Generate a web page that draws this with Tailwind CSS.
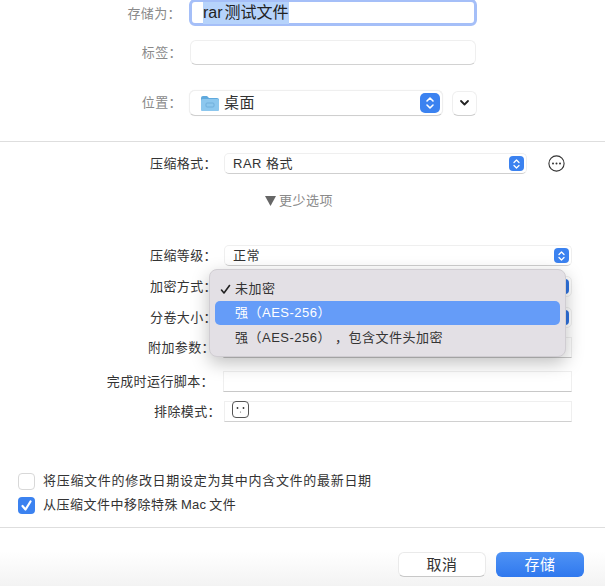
<!DOCTYPE html>
<html lang="zh-CN">
<head>
  <meta charset="UTF-8" />
  <title>存储</title>
  <script src="https://cdn.jsdelivr.net/npm/@tailwindcss/browser@4"></script>
</head>
<body class="bg-white">
<div class="relative w-[605px] h-[586px] overflow-hidden bg-white text-[13px] leading-[18px] text-[#333] font-['Liberation_Sans','Noto_Sans_CJK_SC',sans-serif]">

  <!-- Save panel top -->
  <section class="h-[142px] border-b border-[#dedede] text-[#8a8a8a]">
    <div class="flex items-center h-[27px]">
      <span class="w-[181px] text-right tracking-[0.4px]">存储为：</span>
      <div class="ml-[8px] w-[288px] h-[27px] -mt-[2px] rounded-[6px] border-[3px] border-[#a5bff8] bg-white flex items-center pl-[11px] text-[16px] text-[#222]">
        <span class="bg-[#b6d3fb] leading-[22px]">rar<span class="ml-[2px]">测试文件</span></span>
      </div>
    </div>
    <div class="flex items-center h-[25px] mt-[13px]">
      <span class="w-[182px] text-right tracking-[0.4px]">标签：</span>
      <div class="ml-[8px] w-[286px] h-[25px] rounded-[6px] bg-white border border-[#efefef] border-b-[#d2d2d2]"></div>
    </div>
    <div class="flex items-center h-[26px] mt-[25px]">
      <span class="w-[182px] text-right tracking-[0.4px]">位置：</span>
      <div class="ml-[7px] w-[254px] h-[26px] rounded-[6px] bg-white border border-[#efefef] border-b-[#cfcfcf] shadow-[0_0_1px_rgba(0,0,0,0.1)] flex items-center pl-[10px] pr-[2px] text-[15px] text-[#333]">
        <svg width="19" height="16" viewBox="0 0 19 16" class="shrink-0">
          <path d="M1 3a2 2 0 0 1 2-2h4l2 2h8a2 2 0 0 1 2 2v9a2 2 0 0 1-2 2H3a2 2 0 0 1-2-2z" fill="#5fa9dd"/>
          <rect x="1" y="4" width="18" height="12" rx="1.5" fill="#8cc7ee"/>
          <rect x="6" y="8" width="8" height="4" rx="1" fill="none" stroke="#6aa9d6" stroke-width="0.8"/>
        </svg>
        <span class="ml-[5px] tracking-[0.5px]">桌面</span>
        <span class="ml-auto w-[20px] h-[20px] rounded-[5px] bg-[#3b82f0] flex items-center justify-center">
          <svg width="12" height="16" viewBox="0 0 12 16" fill="none" stroke="white" stroke-width="1.6" stroke-linecap="round" stroke-linejoin="round"><path d="M3 6l3-3 3 3M3 10l3 3 3-3"/></svg>
        </span>
      </div>
      <div class="ml-[9px] w-[25px] h-[25px] rounded-[6px] bg-white border border-[#efefef] border-b-[#cfcfcf] flex items-center justify-center">
        <svg width="11" height="8" viewBox="0 0 11 8" fill="none" stroke="#222" stroke-width="1.8" stroke-linecap="round" stroke-linejoin="round"><path d="M2 2l3.500 3.500L9 2"/></svg>
      </div>
    </div>
  </section>

  <!-- Compression options -->
  <section class="h-[386px] pt-[11px] border-b border-[#dedede]">
    <div class="flex items-center h-[21px]">
      <span class="w-[217px] text-right tracking-[0.4px]">压缩格式：</span>
      <div class="ml-[7px] w-[303px] h-[21px] rounded-[5px] bg-white border border-[#efefef] border-b-[#cfcfcf] flex items-center pl-[8px] pr-[2px]">
        <span class="tracking-[0.5px]">RAR 格式</span>
        <span class="ml-auto w-[15px] h-[15px] rounded-[4px] bg-[#3b82f0] flex items-center justify-center">
          <svg width="9" height="12" viewBox="0 0 9 12" fill="none" stroke="white" stroke-width="1.3" stroke-linecap="round" stroke-linejoin="round"><path d="M2 4.500L4.500 2 7 4.500M2 7.500L4.500 10 7 7.500"/></svg>
        </span>
      </div>
      <svg width="17" height="17" viewBox="0 0 17 17" class="ml-[21px]" fill="none">
        <circle cx="8.5" cy="8.5" r="7.6" stroke="#333" stroke-width="1.1"/>
        <circle cx="5" cy="8.5" r="1" fill="#333"/><circle cx="8.5" cy="8.5" r="1" fill="#333"/><circle cx="12" cy="8.5" r="1" fill="#333"/>
      </svg>
    </div>
    <div class="flex items-center h-[18px] mt-[18px] pl-[265px] text-[#8a8a8a] tracking-[0.5px]">
      <svg width="11" height="10" viewBox="0 0 11 10" class="mr-[3px]"><path d="M0 0h11L5.500 10z" fill="#666"/></svg>更少选项
    </div>

    <div class="flex items-center h-[21px] mt-[35px]">
      <span class="w-[217px] text-right tracking-[0.4px]">压缩等级：</span>
      <div class="ml-[7px] w-[348px] h-[21px] rounded-[5px] bg-white border border-[#efefef] border-b-[#cfcfcf] flex items-center pl-[8px] pr-[2px]">
        <span class="tracking-[0.5px]">正常</span>
        <span class="ml-auto w-[15px] h-[15px] rounded-[4px] bg-[#3b82f0] flex items-center justify-center">
          <svg width="9" height="12" viewBox="0 0 9 12" fill="none" stroke="white" stroke-width="1.3" stroke-linecap="round" stroke-linejoin="round"><path d="M2 4.500L4.500 2 7 4.500M2 7.500L4.500 10 7 7.500"/></svg>
        </span>
      </div>
    </div>
    <div class="flex items-center h-[21px] mt-[10px]">
      <span class="w-[217px] text-right tracking-[0.4px]">加密方式：</span>
      <div class="ml-[7px] w-[348px] h-[21px] rounded-[5px] bg-white border border-[#efefef] flex justify-end pr-[2px] items-center">
        <span class="w-[15px] h-[15px] rounded-[4px] bg-[#2f73e0]"></span>
      </div>
    </div>
    <div class="flex items-center h-[21px] mt-[10px]">
      <span class="w-[217px] text-right tracking-[0.4px]">分卷大小：</span>
      <div class="ml-[7px] w-[348px] h-[21px] rounded-[5px] bg-white border border-[#efefef] flex justify-end pr-[2px] items-center">
        <span class="w-[15px] h-[15px] rounded-[4px] bg-[#2f73e0]"></span>
      </div>
    </div>
    <div class="flex items-center h-[21px] mt-[9px]">
      <span class="w-[215px] text-right tracking-[0.4px]">附加参数：</span>
      <div class="ml-[8px] w-[349px] h-[21px] bg-white border border-[#efefef] border-b-[#c8c8c8]"></div>
    </div>
    <div class="flex items-center h-[21px] mt-[13px]">
      <span class="w-[214px] text-right tracking-[0.4px]">完成时运行脚本：</span>
      <div class="ml-[9px] w-[349px] h-[21px] bg-white border border-[#efefef] border-b-[#c8c8c8]"></div>
    </div>
    <div class="flex items-center h-[21px] mt-[9px]">
      <span class="w-[221px] text-right tracking-[0.4px]">排除模式：</span>
      <div class="ml-[3px] w-[348px] h-[21px] bg-white border border-[#efefef] border-b-[#d0d0d0] pl-[7px]">
        <div class="w-[17px] h-[17px] -mt-[1px] rounded-[4px] border border-[#555] bg-white">
          <svg width="15" height="15" viewBox="0 0 15 15"><circle cx="4.500" cy="6" r="0.900" fill="#333"/><circle cx="10.500" cy="6" r="0.900" fill="#333"/><circle cx="7.500" cy="10" r="0.600" fill="#666"/></svg>
        </div>
      </div>
    </div>

    <label class="flex items-center h-[18px] mt-[50px] pl-[18px]">
      <span class="w-[17px] h-[17px] rounded-[4px] bg-white border border-[#d8d8d8]"></span>
      <span class="ml-[8px] tracking-[0.7px]">将压缩文件的修改日期设定为其中内含文件的最新日期</span>
    </label>
    <label class="flex items-center h-[18px] mt-[6px] pl-[18px]">
      <span class="w-[17px] h-[17px] rounded-[4px] bg-[#3b82f0] flex items-center justify-center">
        <svg width="13" height="13" viewBox="0 0 13 13" fill="none" stroke="white" stroke-width="2.200" stroke-linecap="round" stroke-linejoin="round"><path d="M2.500 7l3 3.500L10.500 2.500"/></svg>
      </span>
      <span class="ml-[8px] tracking-[0.5px]">从压缩文件中移除特殊<span class="mx-[3px] tracking-[0.2px]">Mac</span>文件</span>
    </label>
  </section>

  <!-- Buttons -->
  <footer class="h-[58px] bg-gradient-to-b from-white via-white via-40% to-[#f3f3f3] flex justify-end items-start gap-[10px] pt-[24px] pr-[21px] text-[15px]">
    <button class="w-[88px] h-[25px] rounded-[6px] bg-white border border-[#eaeaea] border-b-[#c8c8c8] tracking-[0.5px] text-[#333]">取消</button>
    <button class="w-[88px] h-[25px] rounded-[6px] bg-gradient-to-b from-[#4f93f5] to-[#2f78ee] tracking-[0.5px] text-white">存储</button>
  </footer>

  <!-- Open popup menu -->
  <div class="absolute left-[209px] top-[269px] w-[357px] h-[88px] rounded-[8px] bg-[#e3e0e5] border border-[#d0cdd2] shadow-[0_6px_18px_rgba(0,0,0,0.25)] px-[5px] pt-[8px] text-[#333]">
    <div class="flex items-center h-[22px] tracking-[0.5px]">
      <svg width="11" height="11" viewBox="0 0 11 11" fill="none" stroke="#222" stroke-width="1.600" stroke-linecap="round" stroke-linejoin="round" class="ml-[5px]"><path d="M1.500 6l2.500 3L9.500 1.500"/></svg>
      <span class="ml-[4px]">未加密</span>
    </div>
    <div class="flex items-center h-[24px] mt-[1px] rounded-[5px] bg-[#659cf8] text-white pl-[20px] tracking-[0.5px]">强（AES-256）</div>
    <div class="flex items-center h-[24px] mt-[1px] pl-[20px] tracking-[0.5px]">强（AES-256）<span class="ml-[4px]">，</span>包含文件头加密</div>
  </div>
</div>
</body>
</html>
